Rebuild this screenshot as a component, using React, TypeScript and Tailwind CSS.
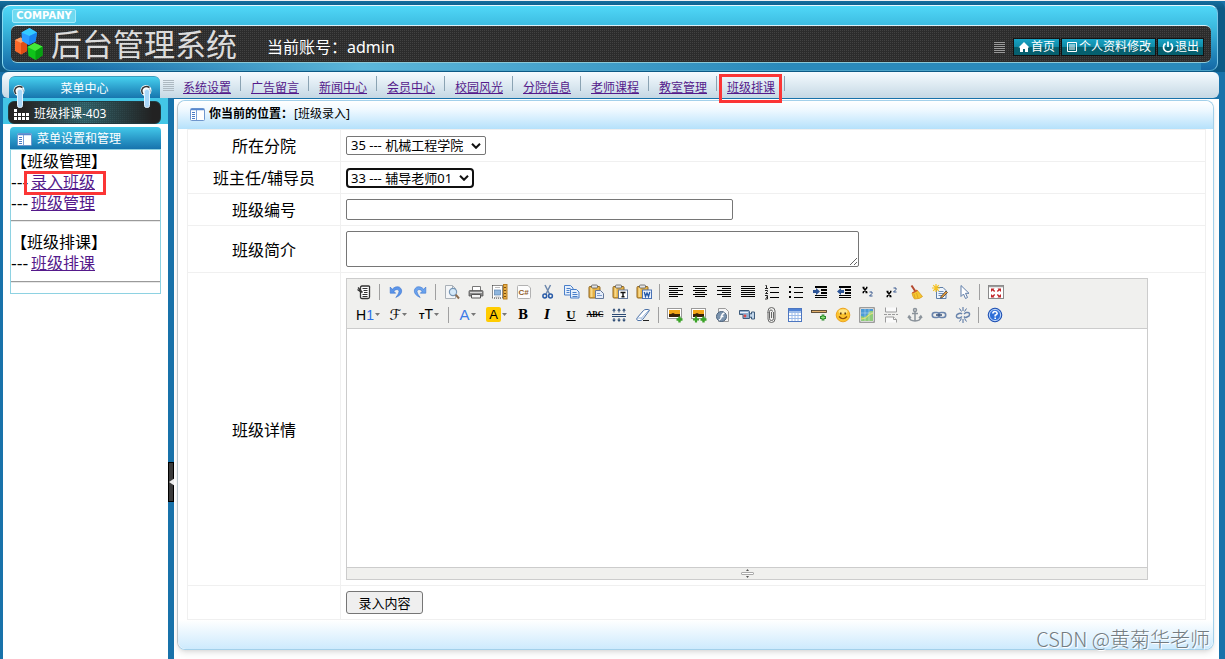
import type { ReactNode } from "react";

const NAV_LINKS = [
  "系统设置",
  "广告留言",
  "新闻中心",
  "会员中心",
  "校园风光",
  "分院信息",
  "老师课程",
  "教室管理",
  "班级排课",
];

function Lines({ color = "#000", rows }: { color?: string; rows: number[][] }) {
  return (
    <g fill={color} shapeRendering="crispEdges">
      {rows.map(([x, y, w, h = 1], i) => (
        <rect key={i} x={x} y={y} width={w} height={h} />
      ))}
    </g>
  );
}

function Clipboard() {
  return (
    <g>
      <rect x="1" y="2.5" width="11" height="11.5" rx="1" fill="#e6b145" stroke="#8f6722" />
      <rect x="2.5" y="4" width="2" height="9" fill="#f7d98c" />
      <rect x="3.5" y="1" width="6" height="3" rx="1" fill="#e4e4e4" stroke="#5b5b5b" strokeWidth=".8" />
    </g>
  );
}

function Photo({ second }: { second?: boolean }) {
  return (
    <g>
      <rect x=".5" y="1.5" width="14" height="10" fill="#fff" stroke="#9a9a9a" />
      <rect x="2" y="3" width="11" height="7" fill="#f2a516" />
      <path d="M2 7h2l2-1 2 1h5v3H2z" fill="#3a2107" />
      {second && <path d="M5 9.500v6M2 12.500h6" stroke="#3aa327" strokeWidth="2.200" />}
      <path d="M12.500 9.500v6M9.500 12.500h6" stroke="#3aa327" strokeWidth="2.400" />
    </g>
  );
}

const ALIGN_LEFT = [[1, 2, 14], [1, 4, 9], [1, 6, 14], [1, 8, 9], [1, 10, 14], [1, 12, 9]];
const ALIGN_CENTER = [[1, 2, 14], [3, 4, 10], [1, 6, 14], [3, 8, 10], [1, 10, 14], [3, 12, 10]];
const ALIGN_RIGHT = [[1, 2, 14], [6, 4, 9], [1, 6, 14], [6, 8, 9], [1, 10, 14], [6, 12, 9]];
const ALIGN_FULL = [[1, 2, 14], [1, 4, 14], [1, 6, 14], [1, 8, 14], [1, 10, 14], [1, 12, 14]];
const INDENT_ROWS = [[3, 2, 12, 2], [9, 5, 6, 2], [9, 8, 6, 2], [3, 11, 12, 1], [3, 13, 12, 1]];

const ICONS: Record<string, ReactNode> = {
  源代码: (
    <g fill="none" stroke="#333">
      <path d="M4.500 6V3.500Q4.500 2 6 2h6.500Q14 2 13.500 4v9q0 1.500-1.500 1.500H6q-1.500 0-1.500-1.500V8" fill="#fff" strokeWidth="1.300" />
      <path d="M6.500 4.500h5M7.500 6.500h4M8 8.500h3.500M6.500 10.500h5M6.500 12.500h5" />
      <path d="M2 3.500l4.500 5M1.500 5.500l4 3" strokeWidth="1.300" />
    </g>
  ),
  后退: (
    <path d="M2.200 3v6.200h5.500L5.800 7.300Q8 4.800 9.800 5.600q2.200 1.400.400 4.500L7.800 13.500Q14.500 10.500 13.600 6 12 1.600 7.500 3 5.500 3.700 4.200 5.300z" fill="#5b95ea" stroke="#3b74cf" strokeWidth=".6" />
  ),
  前进: (
    <path d="M13.800 3v6.200H8.300l1.900-1.900Q8 4.800 6.200 5.600 4 7 5.800 10.100l2.400 3.400Q1.500 10.500 2.400 6 4 1.600 8.500 3q2 .7 3.300 2.300z" fill="#6aa3ee" stroke="#3b74cf" strokeWidth=".6" />
  ),
  预览: (
    <g>
      <path d="M1.500 1.500h7l3 3v10h-10z" fill="#f4f6f8" stroke="#a9b0b7" />
      <path d="M8.500 1.500v3h3" fill="none" stroke="#a9b0b7" />
      <circle cx="9" cy="8" r="3.600" fill="#d5e9f9" stroke="#7796b5" strokeWidth="1.200" />
      <path d="M11.700 10.700l3.300 3.800" stroke="#8a6c50" strokeWidth="2" />
    </g>
  ),
  打印: (
    <g>
      <path d="M4.500 7V2.500h8V7" fill="#fff" stroke="#777" />
      <path d="M1 7.500q0-1 1-1h12q1 0 1 1V12H1z" fill="#8a8a8a" stroke="#555" strokeWidth=".8" />
      <path d="M2 8.500h12" stroke="#d9d9d9" />
      <path d="M3.500 10.500h9v3.500h-9z" fill="#f4f4f4" stroke="#555" />
    </g>
  ),
  模板: (
    <g>
      <rect x=".5" y="1.500" width="10" height="12.500" fill="#fff" stroke="#222" strokeDasharray="1 1" />
      <rect x="2.500" y="6" width="6" height="5" fill="#8fb6de" stroke="#5b84b0" strokeWidth=".7" />
      <path d="M3 3.500h5M3 13h5" stroke="#bbb" />
      <rect x="11.500" y=".5" width="3.500" height="14.500" fill="#e9b04a" stroke="#b77d20" />
      <path d="M12 3.500h2M12 6.500h2M12 9.500h2M12 12.500h2" stroke="#7a4f10" />
    </g>
  ),
  插入代码: (
    <g>
      <path d="M1.500 2.500q0-1 1-1h9.500l2.500 2.500v9.500q0 1-1 1h-11q-1 0-1-1z" fill="#fdfdfd" stroke="#b2b2b2" />
      <text x="2.500" y="10.500" fontSize="8" fontWeight="700" fontFamily="Liberation Sans" fill="#8f5a28">C#</text>
    </g>
  ),
  剪切: (
    <g fill="none">
      <path d="M5 1l4.500 9M10.500 1L6 10" stroke="#6d88ad" strokeWidth="1.500" />
      <circle cx="4.800" cy="12" r="1.900" stroke="#2a5ca8" strokeWidth="1.500" />
      <circle cx="10.500" cy="12" r="1.900" stroke="#2a5ca8" strokeWidth="1.500" />
    </g>
  ),
  复制: (
    <g fill="#e6f0fc" stroke="#4a7fc9">
      <path d="M.5 1.500h6l2.500 2.500v7H.5z" />
      <path d="M2.500 4.500h4M2.500 6.500h3M2.500 8.500h3" />
      <path d="M6.500 5.500h6l2.500 2.500v6H6.500z" />
      <path d="M8.500 8.500h4M8.500 10.500h5M8.500 12.500h5" />
    </g>
  ),
  粘贴: (
    <g>
      <Clipboard />
      <path d="M7.500 6.500h5l3 3v5h-8z" fill="#e6eefb" stroke="#64789a" />
      <path d="M9 9.500h3M9 11.500h5" stroke="#7f9cc7" />
    </g>
  ),
  粘贴为无格式文本: (
    <g>
      <Clipboard />
      <rect x="6.500" y="6" width="9" height="8.500" fill="#fff" stroke="#64789a" />
      <path d="M8.500 8.500h5M11 8v5M9.500 12.800h3" stroke="#111" strokeWidth="1.400" />
    </g>
  ),
  "从 Word 粘贴": (
    <g>
      <Clipboard />
      <rect x="6.500" y="6" width="9" height="8.500" fill="#eaf2fd" stroke="#4a72b4" />
      <path d="M8.300 8l1.200 4.500L11 9l1.500 3.500L13.800 8" stroke="#2559a8" strokeWidth="1.300" fill="none" />
    </g>
  ),
  左对齐: <Lines rows={ALIGN_LEFT} />,
  居中: <Lines rows={ALIGN_CENTER} />,
  右对齐: <Lines rows={ALIGN_RIGHT} />,
  两端对齐: <Lines rows={ALIGN_FULL} />,
  编号: (
    <g>
      <Lines rows={[[6, 3, 9], [6, 8, 9], [6, 13, 9]]} />
      <g fill="none" stroke="#222">
        <path d="M1.500 1.500h1v3M1 4.500h3" />
        <path d="M1 6.500h2.500v1L1.500 9.500h2.500" />
        <path d="M1 11.500h2.500v3.500H1M2 13.300h1.500" />
      </g>
    </g>
  ),
  项目符号: (
    <g>
      <Lines rows={[[6, 3, 9], [6, 8, 9], [6, 13, 9], [1, 2, 2, 2], [1, 7, 2, 2], [1, 12, 2, 2]]} />
    </g>
  ),
  增加缩进: (
    <g>
      <Lines rows={INDENT_ROWS} />
      <path d="M1 6h3V4l4 3.500L4 11V9H1z" fill="#2d5596" />
    </g>
  ),
  减少缩进: (
    <g>
      <Lines rows={INDENT_ROWS} />
      <path d="M8 6H5V4L1 7.500 5 11V9h3z" fill="#2d5596" />
    </g>
  ),
  下标: (
    <g>
      <path d="M3 3.500l4 5M7 3.500l-4 5M2.500 3.500h2M6 3.500h1.500M2.500 8.500H4M5.500 8.500h2" stroke="#000" strokeWidth="1.500" />
      <path d="M9.500 8h2.500v1.500l-2.500 2.500h3" stroke="#35558c" fill="none" />
    </g>
  ),
  上标: (
    <g>
      <path d="M3 7.500l4 5M7 7.500l-4 5M2.500 7.500h2M6 7.500h1.500M2.500 12.500H4M5.500 12.500h2" stroke="#000" strokeWidth="1.500" />
      <path d="M9.500 4h2.500v1.500l-2.500 2.500h3" stroke="#35558c" fill="none" />
    </g>
  ),
  清理代码: (
    <g>
      <path d="M3.500 1.500l4 6" stroke="#b4482e" strokeWidth="2" />
      <path d="M4 9l5-3 5.500 6.500q-2 2.500-8 2.500Q4.500 12.500 4 9z" fill="#f5c62f" stroke="#d89a1d" strokeWidth=".8" />
      <path d="M4.500 9l4.700-2.700" stroke="#c75634" strokeWidth="1.400" />
      <path d="M7 14l-1-4M10 14L8.500 9" stroke="#dba01e" strokeWidth=".8" />
    </g>
  ),
  一键排版: (
    <g>
      <path d="M4.500 3.500H11l3 3v8H4.500z" fill="#eef4fb" stroke="#5f7fa8" />
      <path d="M6.500 7.500h5M6.500 9.500h5M6.500 11.500h5" stroke="#6f8fb8" />
      <path d="M9 12.500l5-5.500 1.500 1.500-5 5-2 .6z" fill="#e89a35" stroke="#333" strokeWidth=".7" />
      <path d="M4 0v8M0 4h8M1.200 1.200l5.600 5.600M6.800 1.200L1.200 6.800" stroke="#f6c21f" strokeWidth="1.200" />
    </g>
  ),
  全选: (
    <path d="M5 1.500v11l2.500-2.500 2 4.500 2-1-2-4.200h3.500z" fill="#fff" stroke="#5f7da8" />
  ),
  全屏显示: (
    <g>
      <rect x=".5" y="1.500" width="15" height="13" fill="#fff" stroke="#8a8a8a" />
      <path d="M1 2.500h14" stroke="#9a9a9a" strokeWidth="1.500" />
      <g fill="#c3272b">
        <path d="M3 4.500h3.500L5.600 5.400 7.200 7l-1 1-1.600-1.600L3 8z" />
        <path d="M13 4.500H9.500l.9.900L8.800 7l1 1 1.600-1.600L13 8z" />
        <path d="M3 13.500h3.500l-.9-.9L7.200 11l-1-1-1.600 1.600L3 10z" />
        <path d="M13 13.500H9.500l.9-.9L8.800 11l1-1 1.600 1.600L13 10z" />
      </g>
    </g>
  ),
  行距: (
    <g>
      <Lines color="#2b4a74" rows={[[1, 7, 14], [1, 9, 14]]} />
      <g stroke="#2b4a74" fill="#2b4a74">
        {[3, 8, 13].map((x) => (
          <g key={x} strokeWidth="1">
            <path d={`M${x} 2v3.500`} />
            <path d={`M${x - 1.5} 3.500L${x} 1.500l1.500 2z`} strokeWidth=".3" />
            <path d={`M${x} 11v3`} />
            <path d={`M${x - 1.5} 12.800l1.500 2 1.500-2z`} strokeWidth=".3" />
          </g>
        ))}
      </g>
    </g>
  ),
  删除格式: (
    <g>
      <path d="M2 11L8.500 3.500q1-1 2.500-1h2.500q1.500 0 .5 1.500L8 12q-1 1.500-3 1.500H3Q1 13 2 11z" fill="#fff" stroke="#4b70a5" />
      <path d="M2 11h4.500l1 1.500M6.500 11L14 3" stroke="#9bb7db" fill="none" />
      <path d="M8 13.500h6" stroke="#222" />
    </g>
  ),
  图片: <Photo />,
  批量图片上传: <Photo second />,
  Flash: (
    <g>
      <path d="M3.500 1.500h7l3 3v10h-10z" fill="#f5f5f5" stroke="#9b9b9b" />
      <circle cx="6.500" cy="9.500" r="5" fill="#7b93ad" stroke="#4c647f" />
      <path d="M9.500 6Q7 6.500 6.500 9.500 6 12.500 3.800 13M5.500 9.500h3" stroke="#fff" fill="none" strokeWidth="1.300" />
    </g>
  ),
  视音频: (
    <g>
      <path d="M.5 3.500h8.500q1.500 0 1.500 1v7H4V7.500H.5z" fill="#8fb0d0" stroke="#3f5d7d" />
      <circle cx="6" cy="9" r="1.400" fill="#e04848" />
      <path d="M10.500 6.500l2 .5V5h3v7h-3V10l-2 .5z" fill="#c2d6ea" stroke="#3f5d7d" />
      <path d="M1 5.500h8" stroke="#e6f0fa" />
    </g>
  ),
  插入文件: (
    <path d="M10.500 5v6.500a2 2 0 01-4 0V4.500a1.500 1.500 0 013 0M5 5v7a3.500 3.500 0 007 0V4a3 3 0 00-7 0v2M8.500 5v6" fill="none" stroke="#666" />
  ),
  表格: (
    <g>
      <rect x="1.500" y="1.500" width="13" height="13" fill="#fff" stroke="#4c76c0" />
      <rect x="2" y="2" width="12" height="2.500" fill="#4f83d6" />
      <path d="M5 4v10M8 4v10M11 4v10M2 5.500h12M2 8.500h12M2 11.500h12" stroke="#9dbce9" />
    </g>
  ),
  插入横线: (
    <g>
      <rect x=".5" y="3.500" width="15" height="2" fill="#e2b06d" stroke="#42341f" strokeWidth=".8" />
      <path d="M12 7.500v6M9 10.500h6" stroke="#2b8a2b" strokeWidth="2.800" />
      <path d="M12 8.500v4M10 10.500h4" stroke="#8ee07a" />
    </g>
  ),
  插入表情: (
    <g>
      <circle cx="8" cy="8" r="6.800" fill="#fbc32e" stroke="#eda41f" />
      <ellipse cx="8" cy="4.500" rx="4.500" ry="2.300" fill="#fde58a" />
      <path d="M4 9.500q4 4.500 8 0" fill="none" stroke="#8a4a08" strokeWidth="1.200" />
      <path d="M5.800 5.500v2M10.200 5.500v2" stroke="#4c2a05" strokeWidth="1.400" />
    </g>
  ),
  百度地图: (
    <g>
      <rect x=".8" y=".8" width="14.400" height="14.400" fill="#fff" stroke="#777" />
      <rect x="2" y="2" width="12" height="12" fill="#4c9bd6" />
      <path d="M2 9l4 1 3-3 2-3h3v10H2z" fill="#8fcb7a" />
      <path d="M2 12q5 0 8-4l4-2" stroke="#e7e06a" fill="none" />
      <path d="M6 2v12M10 2v12M2 6h12" stroke="#fff" strokeOpacity=".35" />
    </g>
  ),
  插入分页符: (
    <g fill="#fafafa" stroke="#9b9b9b">
      <path d="M2.500.5v4.500h11V.5" />
      <path d="M1 7.500h3M5 7.500h3M9 7.500h3M13 7.500h2" />
      <path d="M2.500 15.500V10h8l3 2.500v3" />
      <path d="M10.500 10v2.500h3" />
    </g>
  ),
  锚点: (
    <g fill="none" stroke="#8b939b" strokeWidth="1.500">
      <circle cx="8" cy="3" r="1.500" />
      <path d="M8 4.500V14M5 6.500h6M2 9.500q.5 4.500 6 4.500t6-4.500M1 11l1.200-2L4 11M12 11l1.800-2 1.200 2" />
    </g>
  ),
  超级链接: (
    <g fill="none" stroke="#6984ac" strokeWidth="1.600">
      <rect x="1.300" y="5.500" width="7" height="5" rx="2.500" />
      <rect x="7.700" y="5.500" width="7" height="5" rx="2.500" />
      <path d="M5 8h6" stroke="#40597f" />
    </g>
  ),
  取消超级链接: (
    <g fill="none" stroke="#6984ac" strokeWidth="1.500">
      <path d="M7 7Q6 5.800 4 6.500l-2 1q-1.500 3 1 3.500h2l2-1.500M9 9.500q1 1.500 3 .5l2-1q1.500-3-1-3.500h-2L9 7" />
      <path d="M8 0v4M4.500 1.500l2 3M11.500 1.500l-2 3M8 12v4M4.500 14.500l2-3M11.500 14.500l-2-3" stroke="#4f6f9e" strokeWidth="1" />
    </g>
  ),
  关于: (
    <g>
      <circle cx="8" cy="8" r="6.800" fill="#2f6fd8" stroke="#1f4fb0" />
      <circle cx="8" cy="8" r="5.600" fill="none" stroke="#bcd4f8" />
      <path d="M5.800 6.500Q6 4.500 8 4.500t2.200 1.800Q10 7.500 8.200 8.300V9.500M8.200 10.500V12" fill="none" stroke="#fff" strokeWidth="1.600" />
    </g>
  ),
};

const ROW_ONE = [
  "源代码", "|", "后退", "前进", "|", "预览", "打印", "模板", "插入代码", "剪切", "复制", "粘贴",
  "粘贴为无格式文本", "从 Word 粘贴", "|", "左对齐", "居中", "右对齐", "两端对齐", "编号", "项目符号",
  "增加缩进", "减少缩进", "下标", "上标", "清理代码", "一键排版", "全选", "|", "全屏显示",
];

const ROW_TWO = [
  "行距", "删除格式", "|", "图片", "批量图片上传", "Flash", "视音频", "插入文件", "表格", "插入横线",
  "插入表情", "百度地图", "插入分页符", "锚点", "超级链接", "取消超级链接", "|", "关于",
];

function Separator() {
  return (
    <span className="flex w-2 pl-[3px]">
      <span className="h-4 w-px bg-[#a0a0a0]" />
    </span>
  );
}

function ToolItems({ names }: { names: string[] }) {
  return names.map((name, i) =>
    name === "|" ? (
      <Separator key={i} />
    ) : (
      <button key={i} type="button" aria-label={name} className="flex h-5 w-6 items-center justify-center">
        <svg viewBox="0 0 16 16" className="size-4">
          {ICONS[name]}
        </svg>
      </button>
    ),
  );
}

function Caret() {
  return (
    <svg viewBox="0 0 5 3" className="h-[3px] w-[5px]">
      <path d="M0 0h5L2.500 3z" fill="#777" />
    </svg>
  );
}

function DropTool({ label, wide, children }: { label: string; wide?: boolean; children: ReactNode }) {
  return (
    <button
      type="button"
      aria-label={label}
      className={`flex h-5 items-center justify-center gap-px ${wide ? "w-8" : "w-[29px]"}`}
    >
      {children}
      <Caret />
    </button>
  );
}

function Editor() {
  return (
    <div className="w-[802px] border border-[#ccc] bg-white">
      <div className="border-b border-[#ccc] bg-[#f0f0ee] px-[5px] pt-px pb-[2px]">
        <div className="flex h-[23px] items-center">
          <ToolItems names={ROW_ONE} />
        </div>
        <div className="flex h-[23px] items-center text-black">
          <DropTool label="段落" wide>
            <span className="font-['Liberation_Sans'] text-[14px] leading-4">
              H<span className="text-[#2a6fe8]">1</span>
            </span>
          </DropTool>
          <DropTool label="字体">
            <span className="font-['DejaVu_Serif','DejaVu_Sans'] text-[15px] leading-4">ℱ</span>
          </DropTool>
          <DropTool label="文字大小" wide>
            <span className="font-['Liberation_Sans'] text-[14px] leading-4">
              <span className="text-[9px] font-bold">T</span>T
            </span>
          </DropTool>
          <Separator />
          <DropTool label="文字颜色">
            <span className="font-['Liberation_Sans'] text-[15px] leading-4 text-[#3b7be8]">A</span>
          </DropTool>
          <DropTool label="文字背景">
            <span className="w-[15px] rounded-xs bg-[#ffcc00] font-['Liberation_Sans'] text-[13px] leading-[15px]">A</span>
          </DropTool>
          <button type="button" aria-label="粗体" className="h-5 w-6 font-['DejaVu_Serif'] text-[12px] leading-5 font-bold">B</button>
          <button type="button" aria-label="斜体" className="h-5 w-6 font-['DejaVu_Serif'] text-[12px] leading-5 font-bold italic">I</button>
          <button type="button" aria-label="下划线" className="h-5 w-6 font-['Liberation_Serif'] text-[13px] leading-5 font-bold underline">U</button>
          <button type="button" aria-label="删除线" className="h-5 w-6 font-['Liberation_Serif'] text-[8px] leading-5 font-bold line-through">ABC</button>
          <ToolItems names={ROW_TWO} />
        </div>
      </div>
      <textarea aria-label="班级详情" className="block h-[238px] w-full resize-none outline-none" />
      <div className="flex h-3 items-center justify-center border-t border-[#ccc] bg-[#f0f0ee]">
        <svg viewBox="0 0 13 9" className="h-[9px] w-[13px]">
          <path d="M5 2h3L6.500 0zM5 7h3L6.500 9z" fill="#555" />
          <rect x=".5" y="3.500" width="12" height="2" rx=".5" fill="#fff" stroke="#aaa" />
        </svg>
      </div>
    </div>
  );
}

function PanelIcon() {
  return (
    <svg viewBox="0 0 15 13" className="h-[13px] w-[15px] shrink-0">
      <rect x=".5" y=".5" width="14" height="12" rx="1" fill="#fff" stroke="#6f96cd" />
      <path d="M1 1.500h13" stroke="#5788d0" strokeWidth="1.500" />
      <path d="M6.500 2v10" stroke="#7aa2d8" />
      <path d="M2 4.500h3M2 6.500h3M2 8.500h3M2 10.500h3" stroke="#4c7cc4" />
    </svg>
  );
}

function Cubes() {
  return (
    <svg viewBox="0 0 28 32" className="h-8 w-7">
      <path d="M0 12l5.500-2.500L12 12v11l-6 3.500L0 23z" fill="#fb6a2b" />
      <path d="M0 12l5.500-2.500L12 12l-6 3z" fill="#ffa36b" />
      <path d="M6 15v11.500l6-3.500V12z" fill="#e04d14" />
      <path d="M6.500 4.500L14.500 0 22 4.500l-1.500 9-7 3.500L7 13z" fill="#2b9dff" />
      <path d="M6.500 4.500L14.500 0 22 4.500 14.500 8z" fill="#34cbff" />
      <path d="M14.500 8l-1 9 7-3.500 1.500-9z" fill="#1785f0" />
      <path d="M12.500 19l7-4 8 3.500v9L20.500 32l-7-4z" fill="#0fc41a" />
      <path d="M12.500 19l7-4 8 3.500-7 4.500z" fill="#45e83a" />
      <path d="M20.500 23v9l7-4.500v-9z" fill="#06a010" />
    </svg>
  );
}

function Grip({ className }: { className: string }) {
  return (
    <span aria-hidden="true" className={`flex flex-col gap-px ${className}`}>
      {[0, 1, 2, 3, 4, 5].map((i) => (
        <span key={i} className="h-px w-full bg-current" />
      ))}
    </span>
  );
}

function QuickLink({ icon, children }: { icon: ReactNode; children: ReactNode }) {
  return (
    <a
      href="#"
      className="flex h-4 items-center gap-px bg-linear-to-b from-[#18a3c4] from-0% via-[#0f8aa6] via-50% to-[#06606f] to-50% px-1 text-[12px] leading-4 text-white outline outline-black/60"
    >
      {icon}
      {children}
    </a>
  );
}

function Hook({ className }: { className: string }) {
  return (
    <svg viewBox="0 0 12 24" className={`absolute top-2 z-10 h-6 w-3 ${className}`}>
      <circle cx="6" cy="5.500" r="5.500" fill="#fff" />
      <path d="M3 9Q.5 5.500 3 2.800 6 .3 9.500 2.500" fill="none" stroke="#333" strokeWidth="1.500" />
      <path d="M9.500 3.500Q11.500 6 9.500 9" fill="none" stroke="#9fb4c2" />
      <rect x="4.500" y="4.500" width="5" height="18" rx="2" fill="#a9d6f8" stroke="#e3f3ff" />
    </svg>
  );
}

function RedFrame({ className }: { className: string }) {
  return <span aria-hidden="true" className={`pointer-events-none absolute z-20 border-3 border-[#fb3535] ${className}`} />;
}

function SideLink({ children, framed }: { children: ReactNode; framed?: boolean }) {
  return (
    <li className="flex h-[21px]">
      <span className="w-5 font-['DejaVu_Sans']">---</span>
      <a href="#" className="relative text-[#551a8b] underline">
        {children}
        {framed && <RedFrame className="-top-px -right-[11px] -left-[7px] h-6" />}
      </a>
    </li>
  );
}

function Choice({ id, option, className, active }: { id: string; option: string; className: string; active?: boolean }) {
  return (
    <div className={`relative ${className}`}>
      <select
        id={id}
        className={`block w-full appearance-none bg-white text-[13px] outline-none ${
          active
            ? "h-5 rounded-[4px] border-2 border-[#101010] pl-[3px] leading-4"
            : "h-[19px] rounded-[2px] border border-[#767676] pl-1 leading-[17px]"
        }`}
      >
        <option>{option}</option>
      </select>
      <svg viewBox="0 0 10 6" className="pointer-events-none absolute top-[7px] right-[5px] h-1.5 w-2.5">
        <path d="M1 .8l4 4 4-4" fill="none" stroke="#111" strokeWidth="2" />
      </svg>
    </div>
  );
}

function FormRow({ label, id, height, children }: { label?: string; id?: string; height: string; children: ReactNode }) {
  return (
    <tr className={height}>
      <th scope="row" className="w-[153px] border border-[#f0f0f0] p-0 pt-px text-center text-[16px] leading-6 font-normal">
        {label && <label htmlFor={id}>{label}</label>}
      </th>
      <td className="border border-[#f0f0f0] py-0 pr-0 pl-[5px]">{children}</td>
    </tr>
  );
}

export default function App() {
  return (
    <div className="relative flex min-h-screen flex-col border-t border-[#eef0f1] bg-[#1872aa] font-['Noto_Sans','Noto_Sans_CJK_SC',sans-serif] text-black">
      <header className="rounded-tr-lg bg-linear-to-b from-[#146f9f] from-0% to-[#0c5a86] to-10% pt-1 pr-[7px] pb-px pl-0.5">
        <div className="overflow-hidden rounded-lg border border-t-[#e5f8fd] border-r-[#7bc4e4] border-b-[#4ba3c8] border-l-[#8adcf2] bg-linear-to-b from-[#50d8f8] via-[#3ab8dd] via-35% to-[#1568a5]">
          <div className="flex h-[19px] items-center px-2">
            <span className="mr-auto ml-px flex h-3.5 w-16 items-center justify-center rounded-xs border border-[#a5ebfa] bg-[#6fd9f0] font-['DejaVu_Sans'] text-[10px] leading-3 font-bold text-white">
              COMPANY
            </span>
          </div>
          <div className="mr-1.5 ml-2 flex h-[38px] items-center rounded-md border-t border-b border-t-[#d8eef4] border-b-[#8cc9d8] bg-[conic-gradient(#424242_25%,#2c2c2c_0)] bg-[length:2px_2px] pr-2">
            <span className="ml-1">
              <Cubes />
            </span>
            <h1 className="ml-2 text-[31px] leading-9 font-normal whitespace-nowrap text-[#dcdcdc]">后台管理系统</h1>
            <p className="mt-1.5 ml-[30px] text-[16px] leading-6 whitespace-nowrap text-white">当前账号：admin</p>
            <nav className="mt-1.5 ml-auto flex items-center gap-[3px]" aria-label="快捷">
              <Grip className="mr-1.5 w-[11px] text-[#9a9a9a]" />
              <QuickLink
                icon={
                  <svg viewBox="0 0 12 12" className="size-3">
                    <path d="M6 1L.5 6.500H2V11h3V8h2v3h3V6.500h1.500z" fill="#fff" />
                  </svg>
                }
              >
                首页
              </QuickLink>
              <QuickLink
                icon={
                  <svg viewBox="0 0 12 12" className="size-3">
                    <path d="M1.500 1.500h9v9h-9zM3 4h6M3 6h6M3 8h6" fill="none" stroke="#fff" />
                  </svg>
                }
              >
                个人资料修改
              </QuickLink>
              <QuickLink
                icon={
                  <svg viewBox="0 0 12 12" className="size-3">
                    <path d="M3.500 2.500a4.500 4.500 0 105 0M6 .5V6" fill="none" stroke="#fff" strokeWidth="1.700" />
                  </svg>
                }
              >
                退出
              </QuickLink>
            </nav>
          </div>
          <div className="mr-4 h-[7px] bg-linear-to-r from-transparent from-5% via-[#5cb7da] via-30% to-[#2a8abb] to-65%" />
        </div>
      </header>

      <div className="mr-1.5 ml-0.5 flex h-[26px] rounded-md bg-linear-to-b from-[#f5fbff] to-[#c5d8e4]">
        <div className="relative mt-1 ml-[7px] flex w-[151px] items-center justify-center rounded-t-md border-t border-[#3a9dbd] bg-linear-to-b from-[#46d0ee] to-[#1775ae] pt-0.5 text-[12px] leading-4 text-white">
          <Hook className="left-1" />
          菜单中心
          <Hook className="right-2" />
        </div>
        <Grip className="mt-2 mr-[9px] ml-[3px] w-[11px] text-[#adb9c1]" />
        <nav className="flex items-center text-[12px] leading-4" aria-label="主菜单">
          {NAV_LINKS.map((label, i) => (
            <span key={label} className="flex w-[68px] items-start">
              <a href="#" className="relative mt-1.5 whitespace-nowrap text-[#551a8b] underline">
                {label}
                {i === 8 && <RedFrame className="-top-1.5 -right-[7px] -left-2 h-[29px]" />}
              </a>
              <span className="mt-0.5 ml-[9px] h-[15px] w-px bg-[#8aa3b3]" />
            </span>
          ))}
        </nav>
      </div>

      <div className="flex flex-1">
        <aside className="ml-[3px] w-[165px] bg-white">
          <div className="h-[26px] bg-[#43c6e6] pt-[3px] pr-[7px] pl-[5px]">
            <div className="flex h-[23px] items-center gap-[5px] rounded-md border border-[#223a40] bg-[linear-gradient(90deg,#252525_10%,transparent_50%,#222_95%),conic-gradient(#3d7078_25%,#2d5b62_0)] bg-[length:100%_100%,2px_2px] px-1 pt-0.5 text-[12px] text-white">
              <svg viewBox="0 0 16 12" className="h-3 w-4" fill="#fff">
                <path d="M1 1h3v3H1zM1 5h3v3H1zM5 5h3v3H5zM9 5h3v3H9zM13 5h3v3h-3zM1 9h3v3H1zM5 9h3v3H5zM9 9h3v3H9zM13 9h3v3h-3z" />
              </svg>
              班级排课-403
            </div>
          </div>
          <section className="mt-[3px] mr-[7px] ml-[7px]">
            <h2 className="flex h-[22px] items-center gap-[5px] rounded-t-sm bg-linear-to-b from-[#43c9ea] to-[#1773ad] pt-0.5 pl-[7px] text-[12px] leading-4 text-white">
              <PanelIcon />
              菜单设置和管理
            </h2>
            <div className="border border-[#8ed2e2] text-[16px] leading-[21px]">
              <div className="pt-px pb-1.5">
                <p>【班级管理】</p>
                <ul>
                  <SideLink framed>录入班级</SideLink>
                  <SideLink>班级管理</SideLink>
                </ul>
              </div>
              <hr className="border-t border-b border-t-[#9a9a9a] border-b-[#e8e8e8]" />
              <div className="pt-2.5 pb-[7px]">
                <p>【班级排课】</p>
                <ul>
                  <SideLink>班级排课</SideLink>
                </ul>
              </div>
              <hr className="border-t border-b border-t-[#9a9a9a] border-b-[#e8e8e8]" />
              <div className="h-2.5" />
            </div>
          </section>
        </aside>

        <div className="w-1.5">
          <button
            type="button"
            aria-label="收起菜单"
            className="mt-[364px] flex h-10 w-1.5 items-center border border-black bg-[#3b3b3b]"
          >
            <svg viewBox="0 0 6 8" className="h-2 w-1.5 shrink-0">
              <path d="M6 0v8L0 4z" fill="#eee" />
            </svg>
          </button>
        </div>

        <main className="mt-px mr-1.5 flex-1 bg-white pt-px pr-[5px] pb-2 pl-[3px]">
          <div className="rounded-lg border border-[#a3d0ea] border-l-[#b9c4ca] shadow-md">
            <div className="flex h-7 items-center gap-1 rounded-t-lg bg-linear-to-b from-white via-[#f0f9ff] via-30% to-[#b5e1fb] pb-0.5 pl-3 text-[12px]">
              <PanelIcon />
              <p>
                <b>你当前的位置：</b>
                <span className="ml-px">[班级录入]</span>
              </p>
            </div>
            <form className="pr-[7px] pl-[9px]" onSubmit={(e) => e.preventDefault()}>
              <table className="w-full table-fixed border-collapse">
                <tbody>
                  <FormRow label="所在分院" id="college" height="h-8">
                    <Choice id="college" option="35 --- 机械工程学院" className="w-[140px]" />
                  </FormRow>
                  <FormRow label="班主任/辅导员" id="teacher" height="h-8">
                    <Choice id="teacher" option="33 --- 辅导老师01" className="w-32" active />
                  </FormRow>
                  <FormRow label="班级编号" id="number" height="h-8">
                    <input id="number" type="text" className="block h-[21px] w-[387px] rounded-[2px] border border-[#767676] px-1 text-[13px]" />
                  </FormRow>
                  <FormRow label="班级简介" id="intro" height="h-[47px]">
                    <textarea id="intro" className="block h-9 w-[513px] rounded-[2px] border border-[#767676] px-1 text-[13px]" />
                  </FormRow>
                  <FormRow label="班级详情" height="h-[313px]">
                    <Editor />
                  </FormRow>
                  <FormRow height="h-[34px]">
                    <button type="submit" className="block h-[23px] w-[77px] rounded-[3px] border border-[#767676] bg-[#efefef] text-[13px] leading-5">
                      录入内容
                    </button>
                  </FormRow>
                </tbody>
              </table>
            </form>
            <div className="h-[29px] rounded-b-lg bg-linear-to-b from-white to-[#cdeafd]" />
          </div>
        </main>
      </div>

      <p className="pointer-events-none absolute right-[15px] bottom-1.5 font-['Noto_Sans_CJK_SC',sans-serif] text-[20px] leading-7 font-light whitespace-nowrap text-[#737b81] [text-shadow:1px_1px_0_#fff]">
        CSDN @黄菊华老师
      </p>
    </div>
  );
}
